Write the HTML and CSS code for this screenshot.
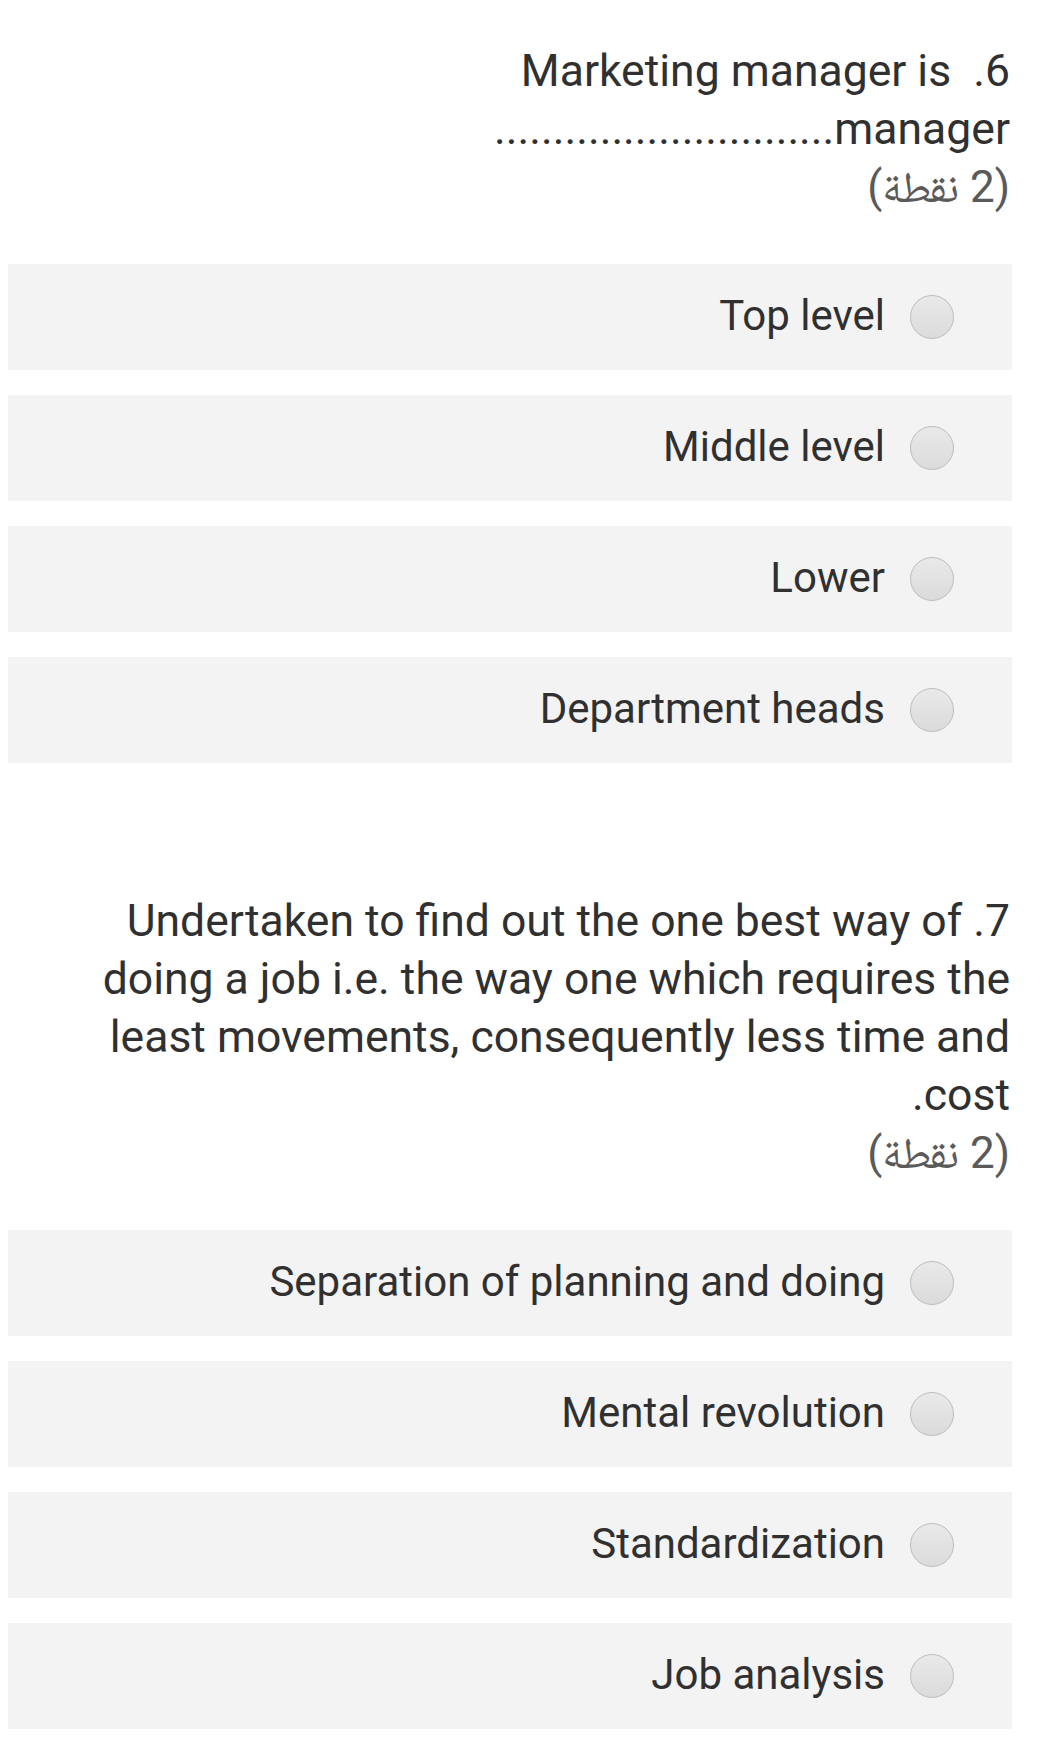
FILE: index.html
```html
<!DOCTYPE html>
<html lang="ar" dir="rtl">
<head>
<meta charset="utf-8">
<title>Quiz</title>
<link rel="stylesheet" href="styles.css">
</head>
<body>
<main class="form">
  <section class="question q-first">
    <div class="title">
      <div class="title-text">6.&nbsp; Marketing manager is .............................manager</div>
      <div class="points">(2 نقطة)</div>
    </div>
    <div class="options">
      <label class="option"><span class="radio"></span><span class="label">Top level</span></label>
      <label class="option"><span class="radio"></span><span class="label">Middle level</span></label>
      <label class="option"><span class="radio"></span><span class="label">Lower</span></label>
      <label class="option"><span class="radio"></span><span class="label">Department heads</span></label>
    </div>
  </section>
  <section class="question q-next">
    <div class="title">
      <div class="title-text">7. Undertaken to find out the one best way of doing a job i.e. the way one which requires the least movements, consequently less time and cost.</div>
      <div class="points">(2 نقطة)</div>
    </div>
    <div class="options">
      <label class="option"><span class="radio"></span><span class="label">Separation of planning and doing</span></label>
      <label class="option"><span class="radio"></span><span class="label">Mental revolution</span></label>
      <label class="option"><span class="radio"></span><span class="label">Standardization</span></label>
      <label class="option"><span class="radio"></span><span class="label">Job analysis</span></label>
    </div>
  </section>
</main>
</body>
</html>
```

FILE: styles.css
```css
html, body {
  margin: 0;
  padding: 0;
  background: #ffffff;
}

body {
  font-family: Roboto, "Noto Sans", "DejaVu Sans", sans-serif;
  color: #303030;
  direction: rtl;
}

.form {
  padding: 0 37px 0 8px;
  display: flex;
  flex-direction: column;
}

.q-first {
  margin-top: 42px;
}

.q-next {
  margin-top: 129px;
}

.title {
  padding: 0 2px 0 50px;
  font-size: 44.5px;
  line-height: 58px;
  text-align: right;
}

.points {
  color: #5a5a5a;
  font-size: 44px;
  font-family: Roboto, "Noto Naskh Arabic", "Noto Sans Arabic", "DejaVu Sans", sans-serif;
}

.options {
  margin-top: 48px;
  display: flex;
  flex-direction: column;
  gap: 25px;
}

.option {
  height: 106px;
  background: #f3f3f3;
  display: flex;
  align-items: center;
  gap: 25px;
  padding-right: 58px;
  font-size: 42px;
}

.radio {
  box-sizing: border-box;
  width: 44px;
  height: 44px;
  border-radius: 50%;
  border: 1.5px solid #bdbdbd;
  background: linear-gradient(#e9e9e9, #dbdbdb);
  flex: none;
}

.label {
  color: #303030;
  padding-bottom: 3px;
}
```
